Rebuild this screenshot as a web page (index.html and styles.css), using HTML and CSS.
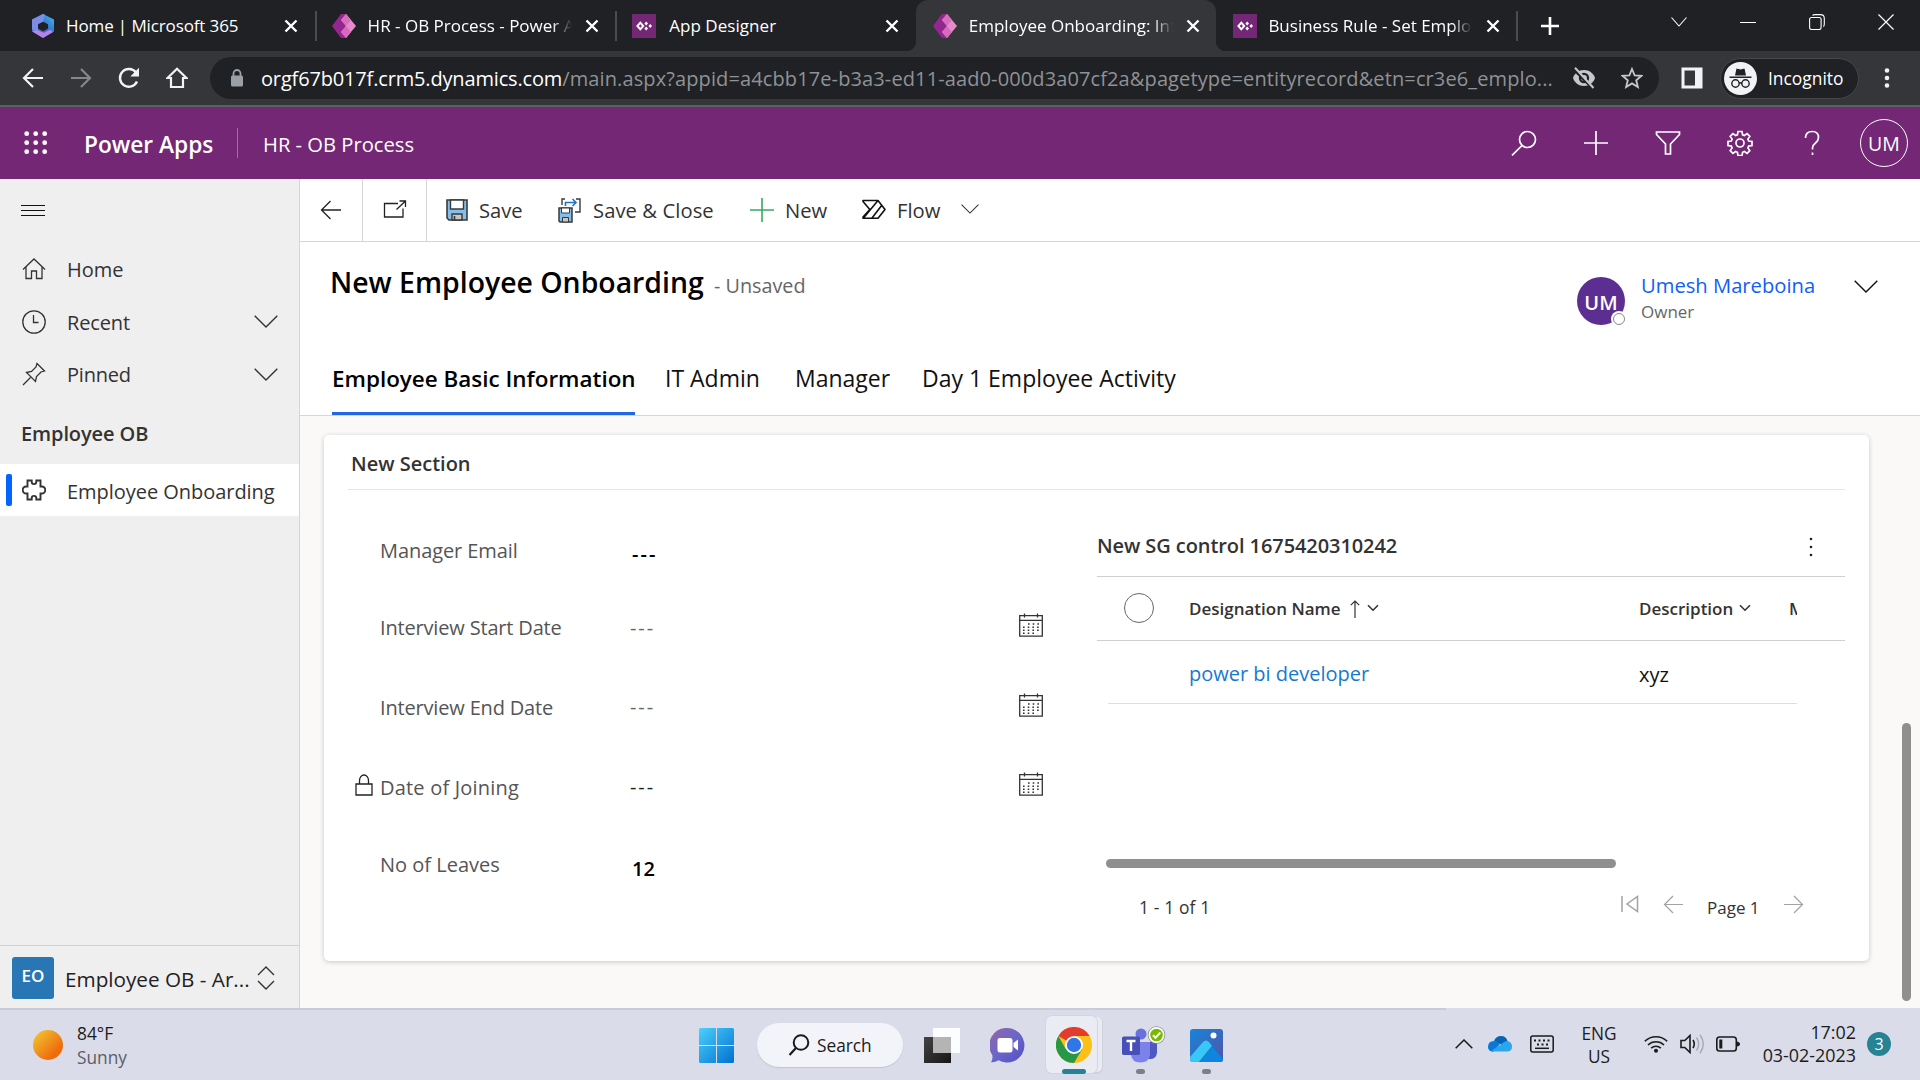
FILE: index.html
```html
<!DOCTYPE html>
<html lang="en">
<head>
<meta charset="utf-8">
<title>Employee Onboarding</title>
<link rel="stylesheet" href="styles.css">
</head>
<body>
<svg class="defs" width="0" height="0" aria-hidden="true">
  <defs>
    <linearGradient id="gWin" x1="0" y1="0" x2="1" y2="1"><stop offset="0" stop-color="#4cd0fc"/><stop offset="1" stop-color="#0071d0"/></linearGradient>
    <linearGradient id="gSun" x1="0" y1="0" x2="1" y2="1"><stop offset=".1" stop-color="#f2c02f"/><stop offset=".75" stop-color="#ef6c0d"/></linearGradient>
    <linearGradient id="gChat" x1="0" y1="0" x2="1" y2="1"><stop offset="0" stop-color="#9567a8"/><stop offset=".5" stop-color="#6a66c8"/><stop offset="1" stop-color="#5350c6"/></linearGradient>
    <linearGradient id="gPhoto" x1="0" y1="0" x2="1" y2="1"><stop offset="0" stop-color="#1585db"/><stop offset="1" stop-color="#5553a5"/></linearGradient>
    <linearGradient id="gTask" x1="0" y1="0" x2="1" y2="1"><stop offset="0" stop-color="#444"/><stop offset="1" stop-color="#161616"/></linearGradient>
    <linearGradient id="g365" x1="0" y1="1" x2="1" y2="0"><stop offset="0" stop-color="#5a5fc8"/><stop offset=".5" stop-color="#3467c4"/><stop offset="1" stop-color="#3cc4f5"/></linearGradient>
  </defs>
  <symbol id="x" viewBox="0 0 14 14"><path d="M1.5 1.5l11 11M12.500 1.5l-11 11" stroke="#fff" stroke-width="2.4" fill="none"/></symbol>
  <symbol id="papps" viewBox="0 0 24 28" preserveAspectRatio="none"><path d="M9 0h5l5 7-5 7 5 7-5 7H9L0 14z" fill="#93278f"/><path d="M14 0l10 14-10 14-5-7 5-7-5-7z" fill="#e48bcb"/><path d="M14 0l5 7-5 7-5-7z" fill="#d66fbb"/><path d="M14 14l5 7-5 7-5-7z" fill="#d86abb"/></symbol>
  <symbol id="designer" viewBox="0 0 24 24"><path d="M0 0h24v24H0z" fill="#742774"/><path d="M8.300 8.700l2.900 3.300-2.900 3.300L5.400 12z" fill="none" stroke="#fff" stroke-width="2"/><path d="M14.200 7.400l1.800 2-1.800 2-1.800-2zM14.200 12.600l1.800 2-1.800 2-1.800-2zM18.200 10l1.800 2-1.800 2-1.800-2z" fill="#fff"/></symbol>
  <symbol id="chev" viewBox="0 0 24 13"><path d="M.7.8L12 12 23.300.8" fill="none" stroke="currentColor" stroke-width="1.4"/></symbol>
  <symbol id="chevs" viewBox="0 0 12 8"><path d="M1 1.200l5 5 5-5" fill="none" stroke="currentColor" stroke-width="1.600"/></symbol>
  <symbol id="arrow" viewBox="0 0 22 20"><path d="M21 10H1.500M10.500 1l-9 9 9 9" fill="none" stroke="currentColor" stroke-width="1.300"/></symbol>
  <symbol id="cal" viewBox="0 0 24 24"><path d="M.7 2.700h22.600v20.500H.7zM.7 7.300h22.600M5.500.500v4M18.500.500v4" fill="none" stroke="#333" stroke-width="1.300"/><path d="M9 11h11M4 14.300h16M4 17.300h16M4 20.300h12" stroke="#333" stroke-width="1.500" stroke-dasharray="1.600 3.100" fill="none"/></symbol>
</svg>

<div class="screen">
  <div class="tabstrip">
    <div class="tab">
      <svg class="fav" viewBox="0 0 24 28" preserveAspectRatio="none"><path d="M12 0l11 6.500v14L12 28 1 20.500v-14z" fill="url(#g365)"/><path d="M1 6.500L12 0l2 1-2 9-5 4v8L1 18z" fill="#7c8de8"/><path d="M1 20l6-1 6 3 6-4 3 3-10 7z" fill="#b883e8"/><path d="M12 9l5 3v5l-5 3-5-3v-5z" fill="#202124"/></svg>
      <span class="ttl t1">Home | Microsoft 365</span><svg class="cls"><use href="#x"/></svg>
    </div>
    <div class="tab sep">
      <svg class="fav"><use href="#papps"/></svg>
      <span class="ttl fade t2">HR - OB Process - Power Apps</span><svg class="cls"><use href="#x"/></svg>
    </div>
    <div class="tab sep">
      <svg class="fav"><use href="#designer"/></svg>
      <span class="ttl t3">App Designer</span><svg class="cls"><use href="#x"/></svg>
    </div>
    <div class="tab active">
      <svg class="fav"><use href="#papps"/></svg>
      <span class="ttl fade t4">Employee Onboarding: Information</span><svg class="cls"><use href="#x"/></svg>
    </div>
    <div class="tab">
      <svg class="fav"><use href="#designer"/></svg>
      <span class="ttl fade t5">Business Rule - Set Employee</span><svg class="cls"><use href="#x"/></svg>
    </div>
    <div class="newtab"><svg width="18" height="18" viewBox="0 0 18 18"><path d="M9 0v18M0 9h18" stroke="#fff" stroke-width="2.600"/></svg></div>
    <div class="winbtns">
      <svg width="16" height="10" viewBox="0 0 16 10"><path d="M.500.500L8 9 15.500.500" fill="none" stroke="#fff" stroke-width="1.100"/></svg>
      <svg width="16" height="16" viewBox="0 0 16 16"><path d="M0 8.500h16" stroke="#fff"/></svg>
      <svg width="16" height="16" viewBox="0 0 16 16"><rect x=".6" y="3.500" width="11.500" height="12" rx="2" fill="none" stroke="#fff" stroke-width="1.100"/><path d="M3.500 1.500C4 .8 4.500.6 6 .6h5.500q3.800 0 3.800 3.800V10c0 1.500-.3 2.200-1 2.600" fill="none" stroke="#fff" stroke-width="1.100"/></svg>
      <svg width="16" height="16" viewBox="0 0 16 16"><path d="M.500.500l15 15M15.500.500l-15 15" stroke="#fff" stroke-width="1.200"/></svg>
    </div>
  </div>

  <div class="toolbar">
    <div class="navbtns">
      <svg width="22" height="20" viewBox="0 0 22 20"><path d="M21 10H2M11 1l-9 9 9 9" fill="none" stroke="#f1f3f4" stroke-width="2.200"/></svg>
      <svg width="22" height="20" viewBox="0 0 22 20"><path d="M1 10h19M11 1l9 9-9 9" fill="none" stroke="#85878b" stroke-width="2.200"/></svg>
      <svg width="22" height="22" viewBox="0 0 22 22"><path d="M19 14.500A8.900 8.900 0 1 1 18 5.500" fill="none" stroke="#f1f3f4" stroke-width="2.400"/><path d="M21 .8v8.700h-8.700z" fill="#f1f3f4"/></svg>
      <svg width="22" height="22" viewBox="0 0 22 22"><path d="M1.500 11L11 1.800 20.500 11H17v9H5v-9z" fill="none" stroke="#f1f3f4" stroke-width="2.200"/></svg>
    </div>
    <div class="omnibox">
      <svg class="olock" width="14" height="18" viewBox="0 0 14 18"><path d="M3.500 7V4.500a3.500 3.500 0 0 1 7 0V7" fill="none" stroke="#9aa0a6" stroke-width="1.800"/><rect x="1" y="6.500" width="12" height="11" rx="1.500" fill="#9aa0a6"/></svg>
      <span class="url"><b>orgf67b017f.crm5.dynamics.com</b><i>/main.aspx?appid=a4cbb17e-b3a3-ed11-aad0-000d3a07cf2a&amp;pagetype=entityrecord&amp;etn=cr3e6_emplo...</i></span>
      <svg class="eye" width="24" height="22" viewBox="0 0 24 22"><path d="M12 3C6.500 3 2.500 6.500 1 11c1.500 4.500 5.500 8 11 8s9.500-3.500 11-8c-1.500-4.500-5.500-8-11-8z" fill="#c4c7cb"/><circle cx="12" cy="11" r="5.200" fill="#202124"/><circle cx="12" cy="11" r="2.900" fill="#c4c7cb"/><path d="M1.500 2l18 18" stroke="#202124" stroke-width="3"/><path d="M3 .8L21.500 21" stroke="#c4c7cb" stroke-width="2"/></svg>
      <svg class="star" width="22" height="22" viewBox="0 0 22 22"><path d="M11 2l2.600 6.300 6.900.5-5.300 4.500 1.700 6.700-5.900-3.600L5.100 20l1.700-6.700L1.500 8.800l6.900-.5z" fill="none" stroke="#c4c7cb" stroke-width="1.800"/></svg>
    </div>
    <svg class="panel" width="22" height="22" viewBox="0 0 22 22"><path d="M2 2h18v18H2z" fill="none" stroke="#f1f3f4" stroke-width="3"/><path d="M14 2h7v18h-7z" fill="#f1f3f4"/></svg>
    <div class="incog">
      <svg width="33" height="33" viewBox="0 0 33 33"><circle cx="16.500" cy="16.500" r="16.500" fill="#f1f3f4"/><path d="M12.500 6.500l4 1 4-1 1.500 7H11zM5.500 14.500h22v1.500h-22z" fill="#202124"/><circle cx="11.500" cy="21.500" r="3.700" fill="none" stroke="#202124" stroke-width="1.400"/><circle cx="21.500" cy="21.500" r="3.700" fill="none" stroke="#202124" stroke-width="1.400"/><path d="M15 21.500q1.500-1.400 3 0" fill="none" stroke="#202124" stroke-width="1.400"/></svg>
      <span>Incognito</span>
    </div>
    <svg class="kebab" width="6" height="20" viewBox="0 0 6 20"><circle cx="3" cy="2.500" r="2.300" fill="#f1f3f4"/><circle cx="3" cy="10" r="2.300" fill="#f1f3f4"/><circle cx="3" cy="17.500" r="2.300" fill="#f1f3f4"/></svg>
  </div>

  <header class="appbar">
    <svg class="waffle" width="24" height="24" viewBox="0 0 24 24" fill="#fff"><circle cx="2.700" cy="2.700" r="2.400"/><circle cx="11.700" cy="2.700" r="2.400"/><circle cx="20.700" cy="2.700" r="2.400"/><circle cx="2.700" cy="11.700" r="2.400"/><circle cx="11.700" cy="11.700" r="2.400"/><circle cx="20.700" cy="11.700" r="2.400"/><circle cx="2.700" cy="20.700" r="2.400"/><circle cx="11.700" cy="20.700" r="2.400"/><circle cx="20.700" cy="20.700" r="2.400"/></svg>
    <strong class="brand">Power Apps</strong>
    <span class="appname">HR - OB Process</span>
    <div class="actions">
      <svg width="26" height="26" viewBox="0 0 26 26"><circle cx="16.500" cy="9.500" r="8" /><path d="M11 15.500L1 25.300"/></svg>
      <svg width="26" height="26" viewBox="0 0 26 26"><path d="M13 1v24M1 13h24"/></svg>
      <svg width="26" height="26" viewBox="0 0 26 26"><path d="M1.500 2h23v2.500L15.500 14v10h-5V14l-9-9.500z"/></svg>
      <svg width="26" height="26" viewBox="0 0 26 26"><circle cx="13" cy="13" r="4"/><path d="M11 1.500h4l.6 3.300 1.800.7 2.700-1.900 2.700 2.800-1.900 2.700.8 1.900 3.300.5v4l-3.300.6-.8 1.800 1.900 2.700-2.700 2.800-2.700-1.900-1.800.8-.6 3.200h-4l-.6-3.200-1.800-.8-2.700 1.900-2.700-2.800 1.900-2.700-.8-1.800-3.300-.6v-4l3.300-.5.8-1.900-1.900-2.700 2.700-2.800 2.700 1.900 1.800-.7z"/></svg>
      <svg width="26" height="26" viewBox="0 0 26 26"><path d="M6.500 8q0-6.500 6.800-6.500 6.200 0 6.200 6 0 3-3 5.500-3 2.300-3 5v1.500M13.500 22.500v2.500"/></svg>
      <span class="me">UM</span>
    </div>
  </header>

  <div class="main">
    <nav class="side">
      <div class="burger"><svg width="24" height="12" viewBox="0 0 24 12"><path d="M0 .5h24M0 5.500h24M0 10.500h24" stroke="#111" stroke-width="1"/></svg></div>
      <div class="item">
        <svg width="24" height="24" viewBox="0 0 24 24"><path d="M1 12.500L12 2l11 10.500M4 10v11.500h5.500V14h5v7.500H20V10"/></svg><span class="s1">Home</span>
      </div>
      <div class="item">
        <svg width="24" height="24" viewBox="0 0 24 24"><circle cx="12" cy="12" r="11.200"/><path d="M11.500 5v7.500h5"/></svg><span class="s2">Recent</span><svg class="chev"><use href="#chev"/></svg>
      </div>
      <div class="item">
        <svg width="24" height="24" viewBox="0 0 24 24"><path d="M15 1.500L22.500 9l-3.500 1-4.500 4.500-1 5L4.500 10.500l5-1L14 5zM8.500 15.500L1 23"/></svg><span class="s3">Pinned</span><svg class="chev"><use href="#chev"/></svg>
      </div>
      <div class="group">Employee OB</div>
      <div class="item sel">
        <svg width="24" height="24" viewBox="0 0 24 24"><path class="thick" d="M5.500 2.500h4.200v1.300a2.300 2.300 0 0 0 4.600 0V2.500h4.200v6h1.300a3 3 0 0 1 0 7h-1.300v6h-4.200v-1.300a2.300 2.300 0 0 0-4.600 0v1.300H5.500v-6H4.200a3 3 0 0 1 0-7h1.300z"/></svg><span class="s4">Employee Onboarding</span>
      </div>
      <div class="area">
        <span class="eo">EO</span><span class="aname">Employee OB - Ar...</span>
        <svg width="18" height="24" viewBox="0 0 18 24"><path d="M1 9l8-8 8 8M1 15l8 8 8-8" fill="none" stroke="#333" stroke-width="1.400"/></svg>
      </div>
    </nav>

    <div class="work">
      <div class="cmdbar">
        <div class="cbtn c1"><svg width="22" height="20"><use href="#arrow"/></svg></div>
        <div class="cbtn c2"><svg width="24" height="20" viewBox="0 0 24 20"><path d="M15 3.500H1.500V17H20V8.500M13.500 9.500L22.500 1M16.500 1h6v6" fill="none" stroke="#222" stroke-width="1.300"/></svg></div>
        <div class="cmd m1"><svg width="24" height="24" viewBox="0 0 24 24"><path d="M2 2h20v20H4l-2-2z" fill="#83beec" stroke="#3a3a38" stroke-width="1.600"/><path d="M5.500 2h13v9h-13z" fill="#fff" stroke="#3a3a38" stroke-width="1.400"/><path d="M7 22v-6h10v6z" fill="#c8c6c4" stroke="#3a3a38" stroke-width="1.400"/><path d="M9.500 18v4" stroke="#3a3a38" stroke-width="1.600"/></svg><span>Save</span></div>
        <div class="cmd m2"><svg width="24" height="26" viewBox="0 0 24 26"><path d="M2 11h13v14H3l-1-1z" fill="#83beec" stroke="#3a3a38" stroke-width="1.500"/><path d="M4.500 11h8v5h-8z" fill="#fff" stroke="#3a3a38"/><path d="M5.500 25v-4.500h6V25z" fill="#c8c6c4" stroke="#3a3a38"/><path d="M8 2H5v6M19 2h4v13h-5" fill="none" stroke="#3a3a38" stroke-width="1.400"/><path d="M8.500 9V5.500H19M15.500 2L19 5.500 15.500 9" fill="none" stroke="#1e75c8" stroke-width="1.600"/></svg><span>Save &amp; Close</span></div>
        <div class="cmd m3"><svg width="24" height="24" viewBox="0 0 24 24"><path d="M12 0v24M0 12h24" stroke="#35ab62" stroke-width="1.600"/></svg><span>New</span></div>
        <div class="cmd m4"><svg width="24" height="22" viewBox="0 0 24 22"><path d="M1 2.500V1.500h15L23 10.500l-7 8.700H1v-1.200L7.800 10.500zM16 1.500L1.500 19M20 6L10 19" fill="none" stroke="#111" stroke-width="1.600" stroke-linejoin="round"/></svg><span>Flow</span><svg class="fchev" width="18" height="10"><use href="#chev"/></svg></div>
      </div>

      <div class="head">
        <div class="headrow">
          <h1>New Employee Onboarding</h1><span class="unsaved">- Unsaved</span>
          <div class="owner">
            <div class="avatar">UM<i></i></div>
            <div class="oname"><a>Umesh Mareboina</a><small>Owner</small></div>
            <svg class="chev"><use href="#chev"/></svg>
          </div>
        </div>
        <div class="ftabs"><span class="on f1"><em>Employee Basic Information</em></span><span class="f2">IT Admin</span><span class="f3">Manager</span><span class="f4">Day 1 Employee Activity</span></div>
      </div>

      <div class="canvas">
        <section class="card">
          <h2><span>New Section</span></h2>
          <div class="cols">
            <div class="fields">
              <div class="field r1"><label class="l1">Manager Email</label><b class="dash">---</b></div>
              <div class="field r2"><label class="l2">Interview Start Date</label><span class="dash">---</span><svg class="cal"><use href="#cal"/></svg></div>
              <div class="field r3"><label class="l3">Interview End Date</label><span class="dash">---</span><svg class="cal"><use href="#cal"/></svg></div>
              <div class="field r3"><svg class="lock" width="18" height="22" viewBox="0 0 18 22"><path d="M1 10h16v11H1zM4.500 10V6.500a4.500 5.500 0 0 1 9 0V10" fill="none" stroke="#222" stroke-width="1.300"/></svg><label class="l4">Date of Joining</label><span class="dash dk">---</span><svg class="cal up"><use href="#cal"/></svg></div>
              <div class="field r5"><label class="l5">No of Leaves</label><b class="num">12</b></div>
            </div>
            <div class="grid">
              <div class="gtitle"><span>New SG control 1675420310242</span><svg width="4" height="20" viewBox="0 0 4 20" fill="#222"><circle cx="2" cy="2" r="1.300"/><circle cx="2" cy="10" r="1.300"/><circle cx="2" cy="18" r="1.300"/></svg></div>
              <div class="ghead">
                <i class="round"></i>
                <div class="hc1"><span>Designation Name</span><svg width="10" height="18" viewBox="0 0 10 18"><path d="M5 18V1M.8 5.200L5 1l4.200 4.200" fill="none" stroke="#333" stroke-width="1.200"/></svg><svg class="cs"><use href="#chevs"/></svg></div>
                <div class="hc2"><span>Description</span><svg class="cs"><use href="#chevs"/></svg></div>
                <div class="hc3">M</div>
              </div>
              <div class="grow"><a>power bi developer</a><span>xyz</span></div>
              <div class="hbar"></div>
              <div class="pager">
                <span class="cnt">1 - 1 of 1</span>
                <svg width="18" height="18" viewBox="0 0 18 18"><path d="M1 1v16M16.500 1.500v15L6 9z" fill="none" stroke="#a3a3a3" stroke-width="1.500"/></svg>
                <svg class="pp" width="21" height="19"><use href="#arrow"/></svg>
                <span class="pg">Page 1</span>
                <svg class="nn" width="21" height="19"><use href="#arrow"/></svg>
              </div>
            </div>
          </div>
        </section>
        <div class="vbar"></div>
      </div>
    </div>
  </div>

  <footer class="taskbar">
    <svg class="sun" width="30" height="30" viewBox="0 0 30 30"><circle cx="15" cy="15" r="15" fill="url(#gSun)"/></svg>
    <div class="weather"><span>84°F</span><span>Sunny</span></div>
    <svg class="win" width="35" height="35" viewBox="0 0 35 35" fill="url(#gWin)"><path d="M1.500 0H17v17H0V1.500Q0 0 1.500 0zM18 0h15.500Q35 0 35 1.500V17H18zM0 18h17v17H1.500Q0 35 0 33.500zM18 18h17v15.500q0 1.500-1.500 1.500H18z"/></svg>
    <div class="search"><svg width="22" height="22" viewBox="0 0 22 22"><circle cx="13" cy="8.500" r="7.300" fill="none" stroke="#1b1b1b" stroke-width="2"/><path d="M8 14l-6.500 7" stroke="#1b1b1b" stroke-width="2.200"/></svg><span>Search</span></div>
    <svg class="tv" width="36" height="35" viewBox="0 0 36 35"><path d="M0 9h27v26H0z" fill="url(#gTask)"/><path d="M9 0h27v25H9z" fill="#fff" opacity=".92"/><path d="M9 9h18v16H9z" fill="#b4b4b4"/></svg>
    <svg class="chat" width="35" height="35" viewBox="0 0 35 35"><path d="M17.500 0a17.300 17.300 0 1 1-9 32.300Q4 35 1 34q2-2.500 1.300-7A17.300 17.300 0 0 1 17.500 0z" fill="url(#gChat)"/><rect x="7.500" y="10" width="15" height="14.500" rx="2.500" fill="#fff"/><path d="M23.500 15l4.500-3.500v11L23.500 19z" fill="#fff"/></svg>
    <div class="chromebtn">
      <svg width="36" height="36" viewBox="0 0 36 36"><circle cx="18" cy="18" r="18" fill="#fbc116"/><path d="M18 18L2.400 9A18 18 0 0 1 33.600 9H18z" fill="#e33b2e"/><path d="M2.400 9A18 18 0 0 0 18 36l8-13.500L18 18l-8 4.500z" fill="#279847"/><circle cx="18" cy="18" r="9" fill="#fff"/><circle cx="18" cy="18" r="7.200" fill="#2f76e8"/></svg>
      <i></i>
    </div>
    <div class="app teams">
      <svg width="44" height="38" viewBox="0 0 44 38"><circle cx="19" cy="8" r="5.500" fill="#6a70dc"/><path d="M24 16h11v11q-1 6-7 6h-5z" fill="#4e57c4"/><path d="M9 16h19v13q-1 7.500-9.500 7.500T9 29z" fill="#7b83eb"/><rect x="0" y="10.500" width="18" height="18.500" rx="1.800" fill="#474fb8"/><path d="M4.500 15h9M9 15v10" stroke="#fff" stroke-width="2.400"/><circle cx="34.500" cy="9" r="8.800" fill="#8a8c8f"/><circle cx="34.500" cy="9" r="8" fill="#fff"/><circle cx="34.500" cy="9" r="6.300" fill="#79b900"/><path d="M31 9.200l2.500 2.600 4.800-5.300" fill="none" stroke="#fff" stroke-width="2"/></svg><i></i>
    </div>
    <div class="app photos">
      <svg width="33" height="33" viewBox="0 0 33 33"><rect width="33" height="33" rx="3" fill="url(#gPhoto)"/><circle cx="23.500" cy="6.500" r="3" fill="#fff"/><path d="M14 33l10-14 9 11q0 3-3 3z" fill="#0b6fce"/><path d="M0 28l13-15q3-3 6 0l3 4-13 16H3q-3 0-3-3z" fill="#39c7f6"/><path d="M9 33l13-16 11 13q0 3-3 3z" fill="#0e86de"/></svg><i></i>
    </div>
    <div class="tray">
      <svg width="18" height="10" viewBox="0 0 18 10"><path d="M.7 9.300L9 1l8.300 8.300" fill="none" stroke="#1b1b1b" stroke-width="1.500"/></svg>
      <svg class="cloud" width="24" height="16" viewBox="0 0 24 16"><path d="M6 5Q8 0 13 0q5 0 6.500 5L14 9z" fill="#0364b8"/><path d="M0 11q0-6 6-6 3 0 6 3l-7 8Q0 15 0 11z" fill="#0a78d4"/><path d="M3 15l10-6.500q3-3.500 7-3.500 4 1.500 4 5.500 0 5-5 5H6q-2 0-3-.5z" fill="#28a8ea"/></svg>
      <svg class="kb" width="24" height="18" viewBox="0 0 24 18"><rect x=".8" y="1" width="22.400" height="16" rx="2" fill="none" stroke="#1b1b1b" stroke-width="1.500"/><path d="M4 5.500h17M7 9.500h11" stroke="#1b1b1b" stroke-width="2" stroke-dasharray="2 2.500"/><path d="M5 13.300h14" stroke="#1b1b1b" stroke-width="1.500"/></svg>
      <div class="lang"><span>ENG</span><span>US</span></div>
      <svg class="wifi" width="24" height="18" viewBox="0 0 24 18"><path d="M.8 6.300a16 16 0 0 1 22.400 0M4 10a11.500 11.500 0 0 1 16 0M7.200 13.200a7 7 0 0 1 9.600 0" fill="none" stroke="#1b1b1b" stroke-width="1.600"/><circle cx="12" cy="15.800" r="2" fill="#1b1b1b"/></svg>
      <svg class="spk" width="25" height="20" viewBox="0 0 25 20"><path d="M1 6.500h3.800L10 1.500v17l-5.200-5H1z" fill="none" stroke="#1b1b1b" stroke-width="1.600"/><path d="M13 6q2.500 4 0 8" fill="none" stroke="#1b1b1b" stroke-width="1.600"/><path d="M16.500 3.500q4.500 6.500 0 13M20 .8q6.500 9.200 0 18.400" fill="none" stroke="#a9abb6" stroke-width="1.500"/></svg>
      <svg class="bat" width="24" height="16" viewBox="0 0 24 16"><rect x=".8" y="1" width="19.500" height="14" rx="2.800" fill="none" stroke="#1b1b1b" stroke-width="1.600"/><path d="M3.300 3.500h3v9h-3z" fill="#1b1b1b"/><path d="M20.500 5.500q3.500.500 3.500 2.500t-3.500 2.500z" fill="#1b1b1b"/></svg>
      <div class="clock"><span>17:02</span><span>03-02-2023</span></div>
      <b class="badge">3</b>
    </div>
  </footer>
</div>
</body>
</html>
```
FILE: styles.css
```css
* { box-sizing: border-box; }
body { margin: 0; font-family: "Open Sans", "Noto Sans", sans-serif; color: #333; overflow: hidden; }
svg { display: block; flex: none; }
.defs { position: absolute; }
i, em { font-style: normal; }
span, a, label, b, strong, small { white-space: nowrap; }
.screen { width: 1920px; height: 1080px; display: flex; flex-direction: column; }

/* browser tabs */
.tabstrip { height: 51px; flex: none; background: #202124; display: flex; padding-left: 14px; }
.tab { width: 300.6px; flex: none; display: flex; align-items: center; padding-left: 17px; position: relative; }
.tab.sep::before { content: ""; width: 2px; height: 30px; background: #4a4c50; margin: 0 -2px 0 0; position: relative; left: -17px; }
.tab.active { background: #35363a; border-radius: 12px 12px 0 0; }
.tab.active::before, .tab.active::after { content: ""; position: absolute; bottom: 0; width: 10px; height: 10px; }
.tab.active::before { left: -10px; background: radial-gradient(circle at 0 0, #202124 10px, #35363a 10.5px); }
.tab.active::after { right: -10px; background: radial-gradient(circle at 100% 0, #202124 10px, #35363a 10.5px); }
.fav { width: 24px; height: 24px; }
.ttl { width: 206px; margin-left: 12px; overflow: hidden; color: #fff; font-size: 17px; line-height: 30px; }
.t1 { margin-left: 11px; margin-right: 1px; letter-spacing: -.12px; }
.t3 { margin-left: 13px; margin-right: -1px; letter-spacing: .05px; }
.t5 { margin-left: 11px; margin-right: 1px; }
.ttl.fade { -webkit-mask-image: linear-gradient(90deg, #000 184px, transparent 204px); mask-image: linear-gradient(90deg, #000 184px, transparent 204px); }
.cls { width: 14px; height: 14px; margin-left: 11px; }
.newtab { width: 66px; display: flex; align-items: center; justify-content: center; border-left: 2px solid #4a4c50; margin: 11px 0 10px -1px; }
.winbtns { margin-left: 89px; display: flex; gap: 53px; align-items: center; height: 43px; }

/* browser toolbar */
.toolbar { height: 56px; flex: none; background: #35363a; border-bottom: 2px solid #5d5f63; display: flex; align-items: center; padding-left: 22px; }
.navbtns { display: flex; gap: 26px; width: 188px; align-items: center; }
.omnibox { width: 1449px; height: 42px; border-radius: 21px; background: #202124; display: flex; align-items: center; padding-left: 20px; }
.url { width: 1302px; margin-left: 17px; font-size: 20px; line-height: 40px; padding-top: 1px; }
.url b { font-weight: 400; color: #fff; display: inline-block; letter-spacing: -.16px; }
.url i { color: #8f9296; display: inline-block; letter-spacing: .115px; }
.eye { margin-left: 9px; }
.star { margin-left: 25px; }
.panel { margin-left: 22px; }
.incog { width: 139px; height: 41px; margin-left: 17px; border-radius: 21px; background: #202124; border: 1px solid #45474b; display: flex; align-items: center; padding-left: 3px; color: #fff; font-size: 17.400px; }
.incog span { margin-left: 11px; }
.kebab { margin-left: 25px; }

/* app header */
.appbar { height: 72px; flex: none; background: #742774; color: #fff; display: flex; align-items: center; padding-left: 24px; }
.brand { width: 153px; margin-left: 36px; font-size: 22.700px; font-weight: 600; line-height: 30px; padding-top: 3px; height: 33px; }
.appname { height: 30px; border-left: 1px solid #a06fa0; padding-left: 25px; font-size: 20.200px; line-height: 33px; }
.actions { margin-left: auto; display: flex; align-items: center; gap: 46px; padding-right: 12px; }
.actions svg { fill: none; stroke: #fff; stroke-width: 1.700; }
.me { width: 48px; height: 48px; margin-left: -11px; border: 1.500px solid #fff; border-radius: 50%; text-align: center; line-height: 47px; font-size: 19.500px; }

.main { height: 829px; flex: none; display: flex; }
/* side navigation */
.side { width: 300px; flex: none; background: #efefef; border-right: 1px solid #d6d6d6; display: flex; flex-direction: column; color: #333; }
.burger { height: 64px; padding: 26px 0 0 21px; }
.item { height: 52.500px; display: flex; align-items: center; padding-left: 22px; font-size: 20px; position: relative; }
.item svg { fill: none; stroke: #333; stroke-width: 1.300; }
.item .thick { stroke-width: 1.900; }
.item span { width: 187px; margin-left: 21px; }
.item .s3 { letter-spacing: -.2px; }
.item .s2 { padding-top: 1px; letter-spacing: -.15px; }
.item .s4 { padding-top: 2px; letter-spacing: -.04px; }
.chev { width: 24px; height: 13px; }
.group { height: 63.500px; padding-left: 21px; line-height: 65px; font-size: 20px; font-weight: 600; letter-spacing: -.1px; }
.sel { height: 52px; background: #fff; }
.sel::before { content: ""; position: absolute; left: 6px; top: 10px; width: 6px; height: 32px; border-radius: 2px; background: #06f; }
.area { margin-top: auto; height: 63px; border-top: 1px solid #d2d2d2; display: flex; align-items: center; padding: 1px 0 0 12px; font-size: 20px; color: #222; }
.eo { width: 42px; height: 42px; border-radius: 3px; background: #2876b3; color: #fff; font-weight: 600; font-size: 17px; line-height: 37px; text-align: center; }
.aname { width: 192px; margin-left: 11px; line-height: 30px; padding-top: 3px; font-weight: 500; font-size: 20.700px; }

/* command bar */
.work { width: 1620px; display: flex; flex-direction: column; background: #fff; }
.cmdbar { height: 63px; flex: none; border-bottom: 1px solid #d6d6d6; display: flex; padding-bottom: 1px; font-size: 20.200px; }
.cbtn { display: flex; align-items: center; justify-content: center; border-right: 1px solid #d6d6d6; margin-bottom: -1px; color: #222; }
.c1 { width: 63px; }
.c2 { width: 64px; }
.cmd { display: flex; align-items: center; gap: 10px; }
.m1 { width: 110px; margin-left: 18px; }
.m2 { width: 195px; gap: 12px; padding-left: 2px; }
.m2 span { letter-spacing: .08px; }
.m3 { width: 112px; gap: 11px; }
.m4 { gap: 11px; }
.m4 span { width: 52px; }
.fchev { margin-top: -2px; margin-left: 1px; }

/* record header */
.head { height: 174px; flex: none; border-bottom: 1px solid #d6d6d6; display: flex; flex-direction: column; }
.headrow { height: 110px; display: flex; padding-left: 30px; }
h1 { margin: 0; width: 385px; font-size: 28.400px; font-weight: 600; color: #000; line-height: 40px; padding-top: 20px; white-space: nowrap; }
.unsaved { color: #666; font-size: 19.800px; line-height: 40px; padding-top: 24px; margin-left: -1px; }
.owner { margin-left: auto; display: flex; padding-right: 42px; }
.avatar { width: 48px; height: 48px; margin-top: 35px; border-radius: 50%; background: #5c2e91; color: #fff; font-weight: 600; font-size: 20px; line-height: 51px; text-align: center; position: relative; }
.avatar i { position: absolute; right: 0; bottom: 0; width: 12px; height: 12px; border: 1.500px solid #8a8886; border-radius: 50%; background: #fff; box-shadow: 0 0 0 2px #fff; }
.oname { width: 213px; margin-left: 16px; padding-top: 28px; display: flex; flex-direction: column; }
.oname a { color: #115ef8; font-size: 20.200px; font-weight: 500; line-height: 30px; }
.oname small { color: #666; font-size: 17px; line-height: 24px; }
.owner .chev { margin-top: 38px; color: #111; }
.ftabs { display: flex; height: 63px; padding-left: 32px; font-size: 23px; color: #111; line-height: 53px; }
.f1 { width: 333px; font-size: 22.450px; font-weight: 600; color: #000; }
.f1 em { display: block; width: 303px; height: 63px; border-bottom: 3px solid #2266e3; }
.f2 { width: 130px; }
.f3 { width: 127px; }

/* form */
.canvas { height: 592px; background: #faf9f8; display: flex; padding: 19px 0 0 24px; }
.card { width: 1545px; height: 526px; background: #fff; border-radius: 5px; box-shadow: 0 1px 5px rgba(0,0,0,.2); padding: 0 24px; }
h2 { margin: 0; height: 55px; border-bottom: 1px solid #e6e6e6; font-size: 20px; font-weight: 600; line-height: 58px; padding-left: 3px; }
.cols { display: flex; }
.fields { width: 749px; flex: none; padding-top: 22px; }
.field { display: flex; align-items: center; padding-left: 32px; font-size: 20px; position: relative; }
.field label { width: 250px; color: #555; font-size: 20px; }
.l1 { letter-spacing: -.08px; }
.l2, .l3 { letter-spacing: -.17px; }
.l4 { letter-spacing: .2px; }
.r1 { height: 76px; }
.r2 { height: 79px; }
.r3 { height: 80px; }
.r5 { height: 75px; }
.field b { color: #000; font-weight: 600; padding: 7px 0 0 2px; }
.dash { width: 389px; letter-spacing: 1.900px; color: #666; margin-top: -1px; }
.field b.dash { padding-top: 8px; letter-spacing: 2.100px; }
.dash.dk { color: #222; }
.cal { width: 24px; height: 24px; margin-top: -5px; }
.cal.up { margin-top: -7px; }
.lock { margin: -5px 7px 0 -25px; }

/* sub-grid */
.grid { width: 748px; }
.gtitle { height: 87px; border-bottom: 1px solid #cfcfcf; padding: 25px 32px 0 0; display: flex; justify-content: space-between; align-items: center; font-size: 20px; font-weight: 600; line-height: 30px; letter-spacing: -.08px; }
.gtitle svg { margin-top: 2px; }
.ghead { height: 64px; border-bottom: 1px solid #cfcfcf; display: flex; align-items: center; font-size: 17px; font-weight: 600; padding-left: 27px; }
.round { width: 30px; height: 30px; border: 1.500px solid #666; border-radius: 50%; flex: none; margin-top: -1px; }
.hc1 { width: 450px; margin-left: 35px; display: flex; align-items: center; }
.hc1 span { width: 161px; }
.cs { width: 12px; height: 8px; margin-left: 7px; margin-top: -2px; }
.hc2 { width: 150px; display: flex; align-items: center; }
.hc2 span { width: 93px; }
.hc3 { width: 8px; overflow: hidden; }
.grow { height: 63px; border-bottom: 1px solid #dedede; margin: 0 48px 0 11px; padding-left: 81px; display: flex; font-size: 20px; line-height: 65px; }
.grow a { width: 450px; color: #1878cf; }
.grow span { color: #111; line-height: 67px; font-size: 20px; }
.hbar { width: 510px; height: 9px; margin: 155px 0 0 9px; border-radius: 5px; background: #8f8f8f; }
.pager { display: flex; align-items: center; padding: 20px 0 0 42px; margin-top: 3px; font-size: 17.400px; line-height: 34px; height: 51px; color: #333; }
.pager svg { margin-top: -5px; color: #a3a3a3; }
.pager .cnt { width: 482px; padding-top: 1px; letter-spacing: .15px; }
.pager .pp { margin-left: 24px; }
.pg { width: 76px; margin-left: 23px; padding-top: 2px; font-size: 17px; }
.nn { transform: scaleX(-1); }
.vbar { width: 9px; height: 278px; margin: 288px 0 0 33px; border-radius: 5px; background: #8f8f8f; }

/* taskbar */
.taskbar { height: 72px; flex: none; display: flex; background: linear-gradient(#c9cbd9, #c9cbd9) 0 0 / 1446px 2px no-repeat #dadce9; padding-left: 33px; align-items: flex-start; }
.sun { margin-top: 22px; }
.weather { width: 622px; margin-left: 14px; padding-top: 14px; font-size: 17.300px; line-height: 24px; display: flex; flex-direction: column; color: #1b1b1b; }
.weather span + span { color: #5c5e66; }
.win { margin-top: 20px; }
.search { width: 146px; height: 44px; margin: 15px 0 0 23px; border-radius: 22px; background: #f3f4f9; box-shadow: 0 1px 1px #c2c4d0; display: flex; align-items: center; padding-left: 31px; gap: 7px; font-size: 17.300px; color: #1b1b1b; }
.search span { padding-top: 1px; }
.tv { margin: 20px 0 0 21px; }
.chat { margin: 20px 0 0 30px; }
.chromebtn { width: 51px; height: 57px; margin: 8px 0 0 21px; border-radius: 6px; background: #ebecf3; box-shadow: 0 0 0 1px #d3d5e0, 6px 0 0 -1px #ebecf3, 6px 1px 0 0 #cfd1dd; padding: 11px 0 0 10px; }
.chromebtn i { display: block; width: 24px; height: 5px; margin: 6px 0 0 6px; border-radius: 3px; background: #268393; }
.app { display: flex; flex-direction: column; }
.app i { width: 9px; height: 5px; border-radius: 3px; background: #7d7f87; }
.teams { margin: 18px 0 0 25px; }
.teams i { margin: 5px 0 0 14px; }
.photos { margin: 21px 0 0 24px; }
.photos i { margin: 7px 0 0 12px; }
.tray { margin-left: auto; padding-right: 29px; height: 72px; display: flex; align-items: center; color: #1b1b1b; font-size: 17px; line-height: 23px; }
.cloud { margin-left: 15px; }
.kb { margin-left: 18px; }
.lang { width: 46px; margin: 0 0 0 22px; padding-top: 1px; display: flex; flex-direction: column; align-items: center; font-size: 17.300px; }
.wifi { margin-left: 22px; }
.spk { margin-left: 12px; }
.bat { margin-left: 11px; }
.clock { width: 116px; display: flex; flex-direction: column; align-items: flex-end; margin-bottom: 1px; font-size: 17.900px; }
.badge { width: 24px; height: 24px; margin-left: 11px; border-radius: 50%; background: #268393; color: #fff; text-align: center; font-weight: 400; font-size: 16px; line-height: 24px; }
```
